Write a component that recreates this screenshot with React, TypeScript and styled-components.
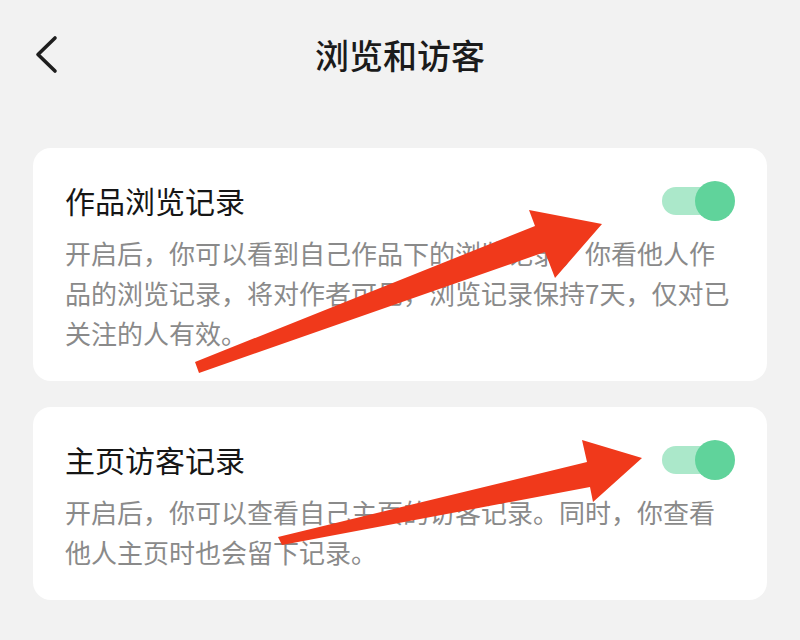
import React from "react";
import styled, { createGlobalStyle } from "styled-components";

const GlobalStyle = createGlobalStyle`
  html, body {
    margin: 0;
    padding: 0;
    background: #f2f2f2;
  }
  body {
    font-family: "Noto Sans CJK SC", "Noto Sans", sans-serif;
  }
`;

const Page = styled.div`
  position: relative;
  width: 800px;
  height: 640px;
  overflow: hidden;
  background: #f2f2f2;
  display: flex;
  flex-direction: column;
`;

const Header = styled.header`
  height: 110px;
  display: grid;
  grid-template-columns: 1fr auto 1fr;
  align-items: center;
`;

const BackButton = styled.button`
  justify-self: start;
  margin-left: 34px;
  width: 28px;
  height: 40px;
  padding: 0;
  border: none;
  background: none;
  display: flex;
  align-items: center;
  justify-content: center;
`;

const Title = styled.h1`
  margin: 0;
  font-size: 34px;
  font-weight: 500;
  color: #1b1b1b;
  line-height: 40px;
`;

const Cards = styled.main`
  display: flex;
  flex-direction: column;
  gap: 26px;
  padding: 38px 33px 0;
`;

const Card = styled.section`
  background: #ffffff;
  border-radius: 18px;
  padding: 32px 32px 28px;
  display: flex;
  flex-direction: column;
  gap: 13px;
`;

const CardHead = styled.div`
  display: flex;
  align-items: center;
  justify-content: space-between;
  height: 40px;
`;

const CardTitle = styled.h2`
  margin: 0;
  font-size: 30px;
  font-weight: 400;
  color: #161616;
  line-height: 40px;
`;

const Desc = styled.p`
  margin: 0;
  width: 668px;
  font-size: 26px;
  line-height: 40px;
  color: #8a8a8a;
`;

const Toggle = styled.div`
  position: relative;
  width: 73px;
  height: 40px;
  margin-top: 2px;
`;

const Track = styled.div<{ $on: boolean }>`
  position: absolute;
  left: 0;
  top: 6px;
  width: 60px;
  height: 28px;
  border-radius: 14px;
  background: ${(p) => (p.$on ? "#abe8ca" : "#dddddd")};
`;

const Knob = styled.div<{ $on: boolean }>`
  position: absolute;
  top: 0;
  ${(p) => (p.$on ? "right: 0;" : "left: 0;")}
  width: 40px;
  height: 40px;
  border-radius: 50%;
  background: ${(p) => (p.$on ? "#60d39b" : "#ffffff")};
`;

const Overlay = styled.svg`
  position: absolute;
  left: 0;
  top: 0;
  width: 800px;
  height: 640px;
  pointer-events: none;
`;

const Switch = ({ on }: { on: boolean }) => (
  <Toggle>
    <Track $on={on} />
    <Knob $on={on} />
  </Toggle>
);

const items = [
  {
    title: "作品浏览记录",
    desc: "开启后，你可以看到自己作品下的浏览记录，你看他人作品的浏览记录，将对作者可见，浏览记录保持7天，仅对已关注的人有效。",
  },
  {
    title: "主页访客记录",
    desc: "开启后，你可以查看自己主页的访客记录。同时，你查看他人主页时也会留下记录。",
  },
];

export default function App() {
  return (
    <>
      <GlobalStyle />
      <Page>
        <Header>
          <BackButton aria-label="返回">
            <svg width="28" height="40" viewBox="0 0 28 40">
              <path
                d="M21 3 L4 19.5 L21 36"
                fill="none"
                stroke="#1e1e1e"
                strokeWidth="3.6"
                strokeLinecap="round"
                strokeLinejoin="round"
              />
            </svg>
          </BackButton>
          <Title>浏览和访客</Title>
          <span />
        </Header>
        <Cards>
          {items.map((it) => (
            <Card key={it.title}>
              <CardHead>
                <CardTitle>{it.title}</CardTitle>
                <Switch on />
              </CardHead>
              <Desc>{it.desc}</Desc>
            </Card>
          ))}
        </Cards>
        <Overlay viewBox="0 0 800 640">
          <polygon
            points="195,362 535,226 529,210 602,224 555,278 545,252 199,373"
            fill="#f0391b"
          />
          <polygon
            points="278,537 587,462 582,440 642,458 593,502 590,487 282,545"
            fill="#f0391b"
          />
        </Overlay>
      </Page>
    </>
  );
}
